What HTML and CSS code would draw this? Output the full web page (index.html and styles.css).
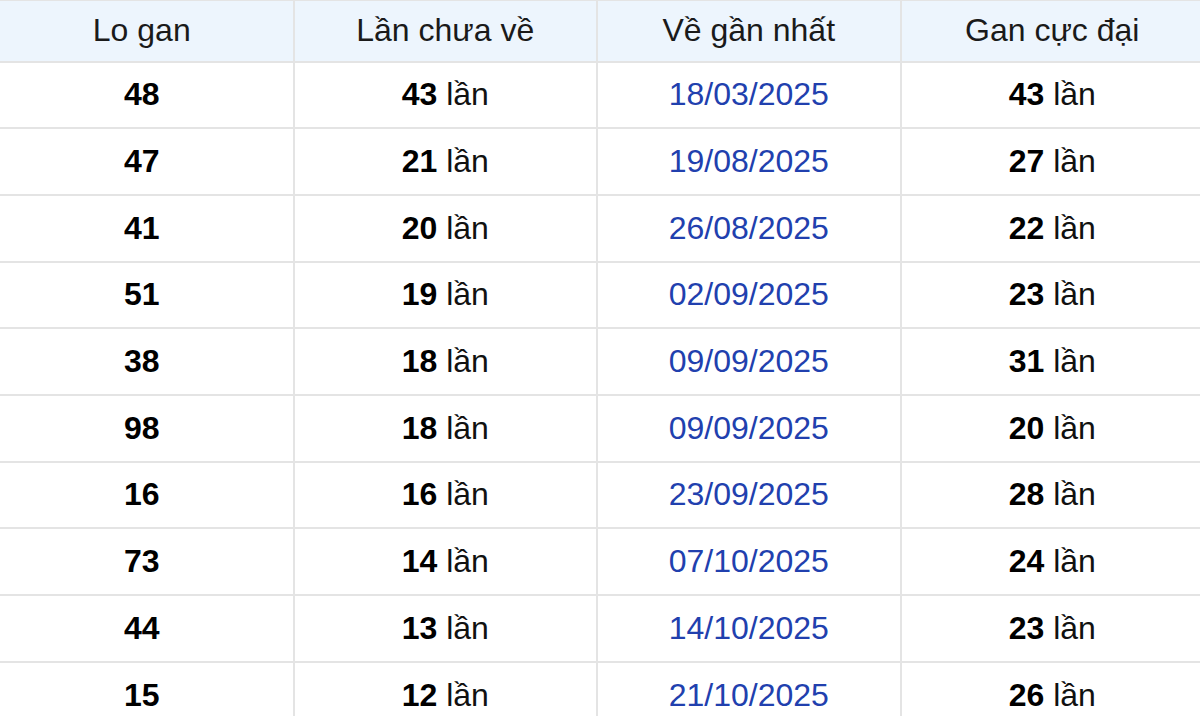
FILE: index.html
```html
<!DOCTYPE html>
<html lang="vi">
<head>
<meta charset="utf-8">
<link rel="stylesheet" href="styles.css">
</head>
<body>
<table class="gan">
  <thead>
    <tr><th>Lo gan</th><th>Lần chưa về</th><th>Về gần nhất</th><th>Gan cực đại</th></tr>
  </thead>
  <tbody>
    <tr><td><b>48</b></td><td><b>43</b> lần</td><td class="date">18/03/2025</td><td><b>43</b> lần</td></tr>
    <tr><td><b>47</b></td><td><b>21</b> lần</td><td class="date">19/08/2025</td><td><b>27</b> lần</td></tr>
    <tr><td><b>41</b></td><td><b>20</b> lần</td><td class="date">26/08/2025</td><td><b>22</b> lần</td></tr>
    <tr><td><b>51</b></td><td><b>19</b> lần</td><td class="date">02/09/2025</td><td><b>23</b> lần</td></tr>
    <tr><td><b>38</b></td><td><b>18</b> lần</td><td class="date">09/09/2025</td><td><b>31</b> lần</td></tr>
    <tr><td><b>98</b></td><td><b>18</b> lần</td><td class="date">09/09/2025</td><td><b>20</b> lần</td></tr>
    <tr><td><b>16</b></td><td><b>16</b> lần</td><td class="date">23/09/2025</td><td><b>28</b> lần</td></tr>
    <tr><td><b>73</b></td><td><b>14</b> lần</td><td class="date">07/10/2025</td><td><b>24</b> lần</td></tr>
    <tr><td><b>44</b></td><td><b>13</b> lần</td><td class="date">14/10/2025</td><td><b>23</b> lần</td></tr>
    <tr><td><b>15</b></td><td><b>12</b> lần</td><td class="date">21/10/2025</td><td><b>26</b> lần</td></tr>
  </tbody>
</table>
</body>
</html>
```
FILE: styles.css
```css
html, body {
  margin: 0;
  padding: 0;
  background: #fff;
  overflow: hidden;
}
body {
  font-family: "Liberation Sans", Arial, sans-serif;
  color: #111;
}
.gan {
  border-collapse: collapse;
  table-layout: fixed;
  width: 1216px;
  margin-left: -11px;
  margin-top: -1px;
}
.gan th, .gan td {
  border: 2px solid #e4e4e4;
  text-align: center;
  vertical-align: middle;
  padding: 0;
  font-size: 32px;
}
.gan th {
  height: 59.5px;
  background: #edf5fd;
  font-weight: normal;
  color: #1a1a1a;
}
.gan td {
  height: 64.7px;
  color: #111;
}
.gan td b {
  font-weight: bold;
  color: #000;
}
.gan td.date {
  color: #2140ae;
}
```
